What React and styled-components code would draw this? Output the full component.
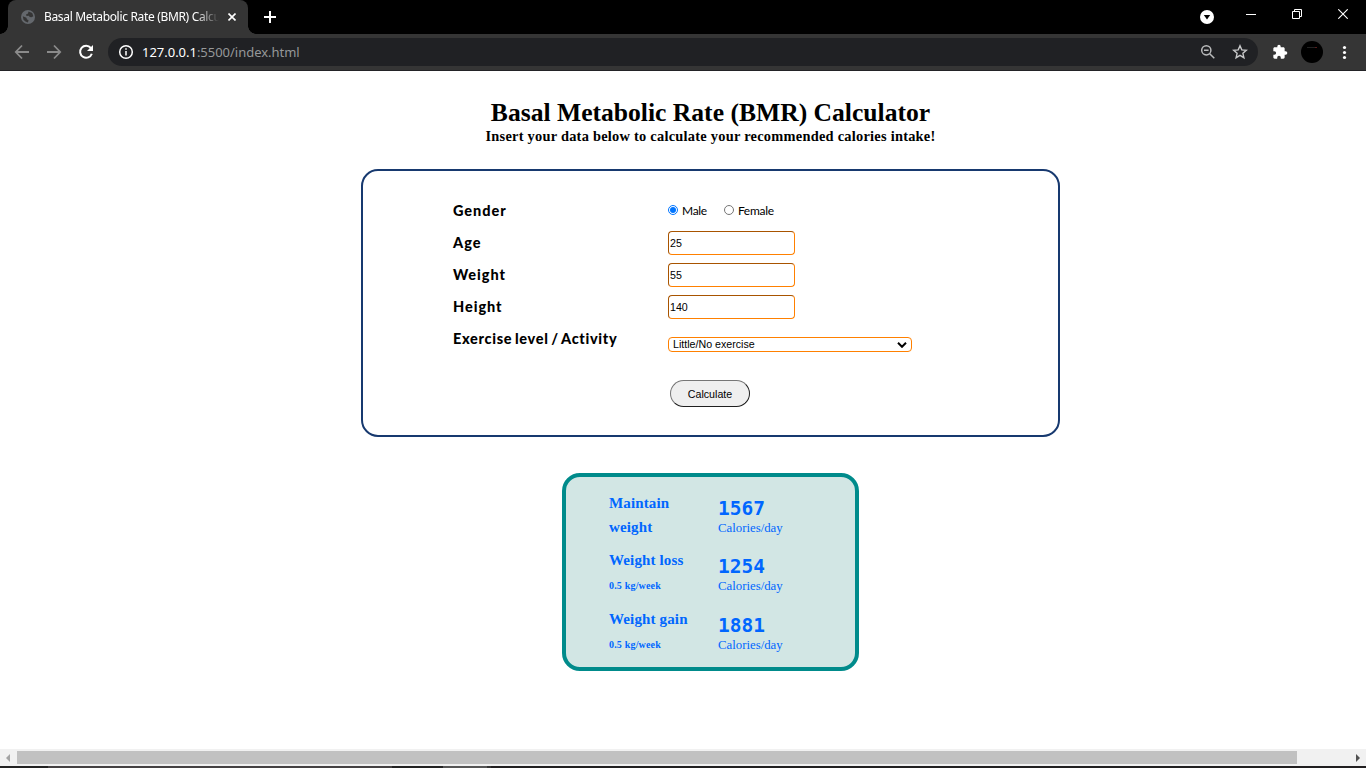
import React from 'react';
import styled, { createGlobalStyle } from 'styled-components';

const GlobalStyle = createGlobalStyle`
  * { box-sizing: border-box; }
  html, body { margin: 0; padding: 0; overflow: hidden; background: #fff; }
  h1, h2, p { margin: 0; }
`;

const Window = styled.div`
  width: 1366px;
  height: 768px;
  display: flex;
  flex-direction: column;
  overflow: hidden;
  background: #fff;
`;

const TitleBar = styled.header`
  height: 34px;
  flex: none;
  display: flex;
  align-items: flex-start;
  background: #000;
`;

const Tab = styled.div`
  position: relative;
  width: 240px;
  height: 34px;
  margin-left: 8px;
  padding: 0 11px 0 13px;
  display: flex;
  align-items: center;
  background: #353535;
  border-radius: 8px 8px 0 0;
  svg { flex: none; }
  &::before, &::after {
    content: '';
    position: absolute;
    bottom: 0;
    width: 8px;
    height: 8px;
  }
  &::before {
    left: -8px;
    background: radial-gradient(circle at 0 0, #000 7.5px, #353535 8px);
  }
  &::after {
    right: -8px;
    background: radial-gradient(circle at 100% 0, #000 7.5px, #353535 8px);
  }
`;

const TabTitle = styled.span`
  flex: none;
  width: 175px;
  margin: 0 9px 0 9px;
  overflow: hidden;
  white-space: nowrap;
  font: 12px/16px 'Noto Sans', sans-serif;
  letter-spacing: -0.33px;
  color: #fff;
  mask-image: linear-gradient(90deg, #000 152px, transparent 175px);
`;

const NewTab = styled.div`
  display: flex;
  margin: 11px 0 0 16px;
`;

const WindowControls = styled.div`
  display: flex;
  align-items: flex-start;
  margin-left: auto;
`;

const Control = styled.div`
  display: flex;
  margin: ${p => p.$top}px ${p => p.$right}px 0 0;
`;

const Toolbar = styled.nav`
  height: 37px;
  flex: none;
  display: flex;
  align-items: center;
  padding: 0 13px 1px 14px;
  background: #353535;
  border-bottom: 1px solid #232327;
`;

const NavIcons = styled.div`
  display: flex;
  flex: none;
  gap: 16px;
`;

const AddressBar = styled.div`
  flex: none;
  width: 1150px;
  height: 28px;
  margin-left: 14px;
  padding: 0 10px;
  display: flex;
  align-items: center;
  border-radius: 14px;
  background: #202124;
`;

const Url = styled.span`
  flex: 1;
  margin-left: 8px;
  font: 13px/20px 'Noto Sans', sans-serif;
  letter-spacing: -0.02px;
  color: #969899;
  b { font-weight: 400; color: #fff; }
`;

const AddressActions = styled.div`
  display: flex;
  gap: 16px;
`;

const ToolbarActions = styled.div`
  display: flex;
  flex: none;
  align-items: center;
  margin-left: 14px;
`;

const Avatar = styled.div`
  width: 22px;
  height: 22px;
  margin: 0 13px 0 13px;
  padding-top: 6px;
  border-radius: 50%;
  background: #000;
  &::after {
    content: '';
    display: block;
    width: 10px;
    height: 1px;
    margin: 0 auto;
    background: linear-gradient(90deg, #222 80%, #5a1c1c 80%);
  }
`;

const Page = styled.main`
  flex: 1;
  padding: 27px 0 0 55px;
  display: flex;
  flex-direction: column;
  align-items: center;
  background: #fff;
`;

const Heading = styled.h1`
  font: bold 25.6px/30px 'Liberation Serif', serif;
  white-space: nowrap;
  color: #000;
`;

const SubHeading = styled.h2`
  font: bold 14.4px/16px 'Liberation Serif', serif;
  letter-spacing: 0.25px;
  white-space: nowrap;
  color: #000;
`;

const FormCard = styled.form`
  width: 699px;
  height: 268px;
  margin-top: 25px;
  padding: 24px 90px 0;
  border: 2px solid #17396f;
  border-radius: 17px;
`;

const FormRow = styled.div`
  height: 32px;
  display: grid;
  grid-template-columns: 215px 1fr;
  align-items: center;
`;

const Label = styled.label`
  font: 900 14.5px/20px Lato, sans-serif;
  letter-spacing: ${p => p.$spacing || 0.95}px;
  word-spacing: ${p => p.$wordSpacing || 0}px;
  white-space: nowrap;
  color: #000;
`;

const RadioGroup = styled.div`
  display: flex;
  align-items: center;
  font: 12px/16px Lato, sans-serif;
  letter-spacing: -0.3px;
  color: #000;
`;

const RadioLabel = styled.label`
  display: flex;
  align-items: center;
  margin-right: 17px;
`;

const Radio = styled.input`
  width: 10px;
  height: 10px;
  margin: 0 4px 2px 0;
`;

const NumberInput = styled.input`
  width: 127px;
  height: 24px;
  padding: 0 1px;
  border: 1px solid;
  border-color: #a85400 #ff8000 #ff8000 #a85400;
  border-radius: 4px;
  background: #fff;
  color: #000;
  font: 10.67px 'Liberation Sans', sans-serif;
  outline: none;
`;

const SelectBox = styled.div`
  width: 244px;
  height: 15px;
  margin-top: 11px;
  padding: 0 4px;
  display: flex;
  align-items: center;
  justify-content: space-between;
  border: 1px solid #ff8000;
  border-radius: 4px;
  font: 10.67px/13px 'Liberation Sans', sans-serif;
  color: #000;
`;

const Button = styled.button`
  display: block;
  width: 80px;
  height: 27px;
  margin: 25px 0 0 217px;
  padding: 0;
  border: 1px solid;
  border-color: #767676 #202020 #202020 #767676;
  border-radius: 14px;
  background: #efefef;
  color: #000;
  font: 10.67px 'Liberation Sans', sans-serif;
`;

const Results = styled.section`
  width: 297px;
  height: 198px;
  margin-top: 36px;
  padding: 14px 0 0 43px;
  border: 4px solid #008b8b;
  border-radius: 18px;
  background: #d2e6e4;
  color: #0066ff;
  font-family: 'Liberation Serif', serif;
`;

const ResultRow = styled.div`
  height: ${p => p.$height}px;
  display: grid;
  grid-template-columns: 109px 1fr;
`;

const Goal = styled.p`
  padding-right: 16px;
  font-size: 15px;
  font-weight: bold;
  line-height: 24px;
  letter-spacing: 0.14px;
`;

const Rate = styled.p`
  font-size: 10px;
  font-weight: bold;
  line-height: 28px;
  letter-spacing: 0.18px;
`;

const Amount = styled.p`
  margin-top: ${p => p.$top}px;
  font: bold 19.5px/22px 'DejaVu Sans Mono', monospace;
`;

const Unit = styled.p`
  font-size: 12.8px;
  line-height: 16px;
`;

const ScrollBar = styled.div`
  height: 17px;
  flex: none;
  display: flex;
  align-items: center;
  padding: 0 6px 0 6px;
  background: #f1f1f1;
`;

const Thumb = styled.div`
  width: 1280px;
  height: 13px;
  margin: 0 auto 0 7px;
  background: #c1c1c1;
`;

const TaskbarEdge = styled.div`
  height: 2px;
  flex: none;
  background: linear-gradient(90deg, #222 48px, #444142 48px 392px, #222 392px 443px, #555 443px 487px, #333 487px 491px, #211f20 491px);
`;

const Line = ({ size = 16, w = 2, color = '#fff', children }) => (
  <svg width={size} height={size} viewBox="0 0 16 16" fill="none" stroke={color} strokeWidth={w}>{children}</svg>
);

const goals = [
  { height: 57, top: 7, name: 'Maintain weight', amount: '1567' },
  { height: 59, top: 8, name: 'Weight loss', rate: '0.5 kg/week', amount: '1254' },
  { height: 58, top: 8, name: 'Weight gain', rate: '0.5 kg/week', amount: '1881' },
];

const fields = [['Age', '25'], ['Weight', '55'], ['Height', '140']];

export default function App() {
  return (
    <Window>
      <GlobalStyle />
      <TitleBar>
        <Tab>
          <svg width="14" height="14" viewBox="0 0 14 14">
            <circle cx="7" cy="7" r="7" fill="#64686d" />
            <path d="M1.8 6.2 5.4 7.8 6 9.5 7.5 10 7 12.5 4.5 11.6 2.5 9.8ZM7.5 1.5 11.2 3.1 12.4 6.2 10.5 7.3 8.6 7 8 5.8 5.5 6 5 4.5 7 3.5Z" fill="#353535" />
          </svg>
          <TabTitle>Basal Metabolic Rate (BMR) Calculator</TabTitle>
          <svg width="8" height="8" viewBox="0 0 8 8" stroke="#fff" strokeWidth="1.6"><path d="M.5.5l7 7M7.5.5l-7 7" /></svg>
        </Tab>
        <NewTab>
          <svg width="12" height="12" viewBox="0 0 12 12" stroke="#fff" strokeWidth="2"><path d="M6 0v12M0 6h12" /></svg>
        </NewTab>
        <WindowControls>
          <Control $top={10} $right={32}>
            <svg width="14" height="14" viewBox="0 0 14 14"><circle cx="7" cy="7" r="7" fill="#fff" /><path d="M3.8 5h6.4L7 9.4Z" fill="#000" /></svg>
          </Control>
          <Control $top={14} $right={36}>
            <svg width="10" height="1"><rect width="10" height="1" fill="#fff" /></svg>
          </Control>
          <Control $top={9} $right={36}>
            <svg width="10" height="10" fill="none" stroke="#fff"><path d="M.5 2.5h7v7h-7ZM2.5 2.5v-2h7v7h-2" /></svg>
          </Control>
          <Control $top={9} $right={18}>
            <svg width="10" height="10" fill="none" stroke="#fff" strokeWidth="1.1"><path d="M.3.3l9.4 9.4M9.7.3.3 9.7" /></svg>
          </Control>
        </WindowControls>
      </TitleBar>
      <Toolbar>
        <NavIcons>
          <Line w={1.8} color="#8b8b8b"><path d="M15 8H2M8 1.5 1.8 8 8 14.5" /></Line>
          <Line w={1.8} color="#8b8b8b"><path d="M1 8h13M8 1.5 14.2 8 8 14.5" /></Line>
          <Line w={2}><path d="M12.8 4A6 6 0 1 0 13.8 9.7" /><path d="M15 1v6H9Z" fill="#fff" stroke="none" /></Line>
        </NavIcons>
        <AddressBar>
          <Line w={1.5}><circle cx="8" cy="8" r="6.3" /><path d="M8 7v4.5M8 4.2v1.6" /></Line>
          <Url><b>127.0.0.1</b>:5500/index.html</Url>
          <AddressActions>
            <Line w={1.5} color="#b9babb"><circle cx="6.3" cy="6.3" r="4.6" /><path d="M4 6.3h4.6M9.7 9.7l4.6 4.6" /></Line>
            <Line w={1.4} color="#c7c8c9"><path d="m8 1.8 1.8 4.1 4.5.4-3.4 3 1 4.4L8 11.4l-3.9 2.3 1-4.4-3.4-3 4.5-.4Z" /></Line>
          </AddressActions>
        </AddressBar>
        <ToolbarActions>
          <svg width="16" height="16" viewBox="0 0 24 24" fill="#fff"><path d="M20.5 11H19V7c0-1.1-.9-2-2-2h-4V3.5a2.5 2.5 0 0 0-5 0V5H4c-1.1 0-2 .9-2 2v3.8h1.5a2.7 2.7 0 0 1 0 5.4H2V20c0 1.1.9 2 2 2h3.8v-1.5a2.7 2.7 0 0 1 5.4 0V22H17c1.1 0 2-.9 2-2v-4h1.5a2.5 2.5 0 0 0 0-5Z" /></svg>
          <Avatar />
          <svg width="16" height="16" viewBox="0 0 16 16" fill="#fff"><circle cx="8.5" cy="3.5" r="1.6" /><circle cx="8.5" cy="8.5" r="1.6" /><circle cx="8.5" cy="13.5" r="1.6" /></svg>
        </ToolbarActions>
      </Toolbar>
      <Page>
        <Heading>Basal Metabolic Rate (BMR) Calculator</Heading>
        <SubHeading>Insert your data below to calculate your recommended calories intake!</SubHeading>
        <FormCard>
          <FormRow>
            <Label>Gender</Label>
            <RadioGroup>
              <RadioLabel><Radio type="radio" name="gender" defaultChecked />Male</RadioLabel>
              <RadioLabel><Radio type="radio" name="gender" />Female</RadioLabel>
            </RadioGroup>
          </FormRow>
          {fields.map(([name, value]) => (
            <FormRow key={name}>
              <Label>{name}</Label>
              <NumberInput defaultValue={value} />
            </FormRow>
          ))}
          <FormRow>
            <Label $spacing={0.68} $wordSpacing={-1.4}>Exercise level / Activity</Label>
            <SelectBox>
              Little/No exercise
              <svg width="10" height="6" viewBox="0 0 10 6" fill="none" stroke="#000" strokeWidth="2"><path d="m1 .8 4 4 4-4" /></svg>
            </SelectBox>
          </FormRow>
          <Button type="button">Calculate</Button>
        </FormCard>
        <Results>
          {goals.map(g => (
            <ResultRow key={g.name} $height={g.height}>
              <div>
                <Goal>{g.name}</Goal>
                {g.rate && <Rate>{g.rate}</Rate>}
              </div>
              <div>
                <Amount $top={g.top}>{g.amount}</Amount>
                <Unit>Calories/day</Unit>
              </div>
            </ResultRow>
          ))}
        </Results>
      </Page>
      <ScrollBar>
        <svg width="4" height="8"><path d="M4 0v8L0 4Z" fill="#a3a3a3" /></svg>
        <Thumb />
        <svg width="4" height="8"><path d="M0 0v8l4-4Z" fill="#505050" /></svg>
      </ScrollBar>
      <TaskbarEdge />
    </Window>
  );
}
